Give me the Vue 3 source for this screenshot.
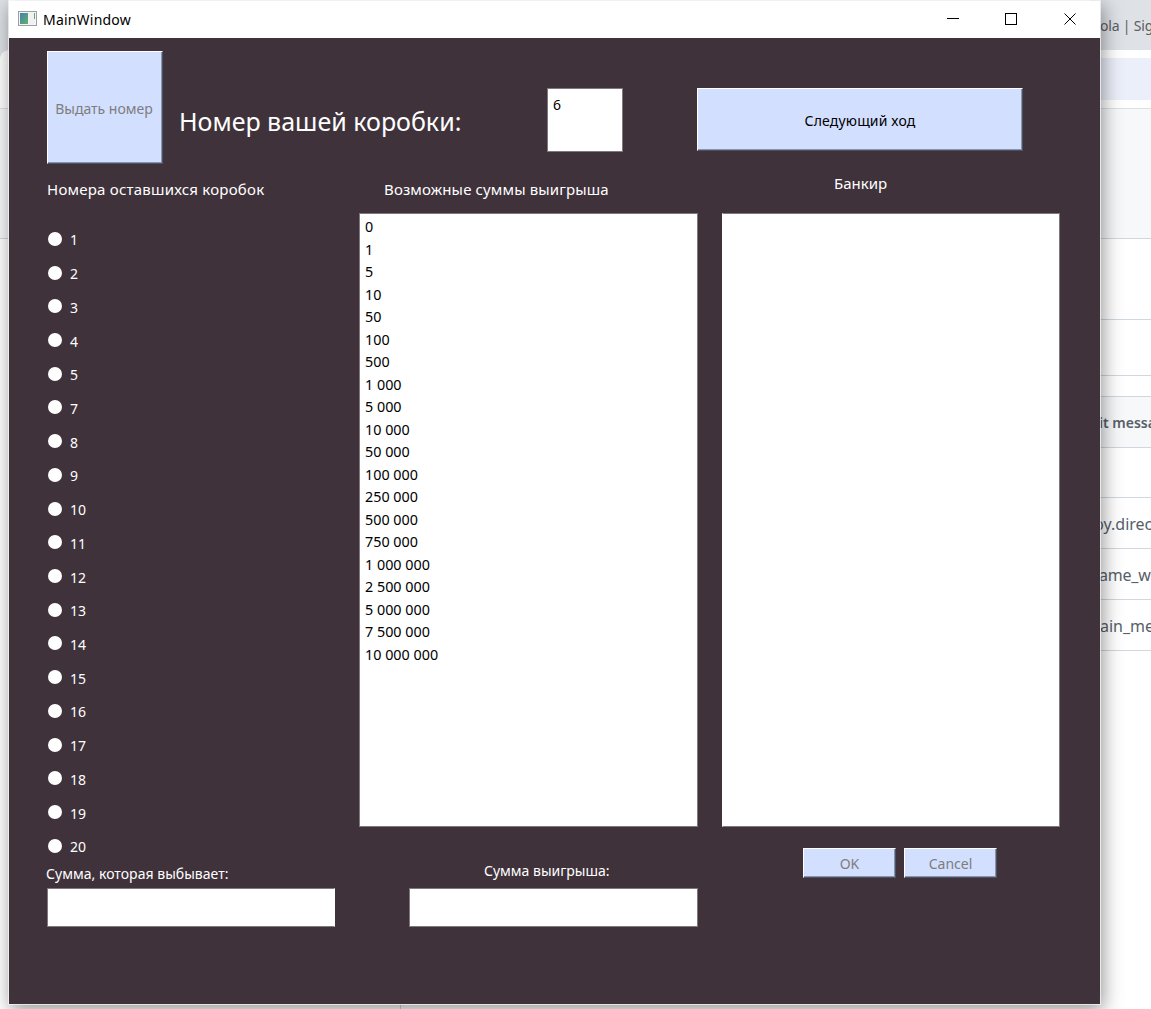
<script setup>
const boxes = Array.from({ length: 20 }, (_, i) => i + 1).filter((n) => n !== 6)
const sums = [
  '0', '1', '5', '10', '50', '100', '500', '1 000', '5 000', '10 000', '50 000',
  '100 000', '250 000', '500 000', '750 000', '1 000 000', '2 500 000',
  '5 000 000', '7 500 000', '10 000 000',
]
</script>

<template>
  <div class="desktop">
    <div class="page">
      <div class="strip tabs"><span>ola | Sig</span></div>
      <div class="strip toolbar"></div>
      <div class="strip header"></div>
      <div class="strip blank"></div>
      <div class="strip info"></div>
      <div class="strip gap"></div>
      <div class="strip commit"><span>it messa</span></div>
      <div class="strip file first"></div>
      <div class="strip file"><span class="dir">by.direc</span></div>
      <div class="strip file"><span class="game">ame_wi</span></div>
      <div class="strip file"><span>ain_me</span></div>
    </div>
    <div class="edge">
      <div class="edge-tabs"></div>
      <div class="edge-bar"></div>
      <div class="edge-head"></div>
      <div class="edge-rest"></div>
    </div>
    <div class="sidebar-rule"></div>

    <div class="window">
      <div class="titlebar">
        <svg class="app-icon" width="19" height="15" viewBox="0 0 19 15">
          <defs>
            <linearGradient id="pane" x1="0" y1="0" x2="1" y2="1">
              <stop offset="0" stop-color="#4a7fb0" />
              <stop offset="1" stop-color="#5db36a" />
            </linearGradient>
          </defs>
          <rect x="0.5" y="0.5" width="18" height="14" fill="#f4f4f4" stroke="#9aa0a6" />
          <rect x="2" y="2" width="8" height="11" fill="url(#pane)" />
          <rect x="11" y="2" width="6" height="11" fill="#f1f1f1" />
          <rect x="16" y="2" width="1" height="6" fill="#5fa58a" />
        </svg>
        <span class="title">MainWindow</span>
        <svg class="controls" width="130" height="14" viewBox="0 0 130 14" fill="none" stroke="#000" shape-rendering="crispEdges">
          <path d="M0 6.5H12" />
          <rect x="58.5" y="1.5" width="11" height="11" />
          <path d="M117.5 1.5L128.5 12.5M128.5 1.5L117.5 12.5" shape-rendering="auto" />
        </svg>
      </div>

      <div class="content">
        <div class="top">
          <button class="btn issue" disabled>Выдать номер</button>
          <h1>Номер вашей коробки:</h1>
          <div class="field number">6</div>
          <button class="btn next">Следующий ход</button>
        </div>

        <div class="columns">
          <section class="col boxes">
            <h2 class="l-boxes">Номера оставшихся коробок</h2>
            <ul class="radios">
              <li v-for="n in boxes" :key="n"><i></i><span>{{ n }}</span></li>
            </ul>
            <p class="caption l-out">Сумма, которая выбывает:</p>
            <div class="field out"></div>
          </section>
          <section class="col sums">
            <h2 class="l-sums">Возможные суммы выигрыша</h2>
            <ul class="field list">
              <li v-for="s in sums" :key="s">{{ s }}</li>
            </ul>
            <p class="caption l-win">Сумма выигрыша:</p>
            <div class="field win"></div>
          </section>
          <section class="col banker">
            <h2 class="l-bank">Банкир</h2>
            <div class="field list"></div>
            <div class="actions">
              <button class="btn small" disabled>OK</button>
              <button class="btn small" disabled>Cancel</button>
            </div>
          </section>
        </div>
      </div>
    </div>
  </div>
</template>

<style>
body {
  margin: 0;
  overflow: hidden;
}
</style>

<style scoped>
.desktop {
  position: relative;
  width: 1151px;
  height: 1009px;
  overflow: hidden;
  background: #fff;
  font-family: "Noto Sans", "Open Sans", sans-serif;
  font-size: 14px;
}
.page {
  position: absolute;
  left: 1090px;
  top: 0;
  width: 61px;
  overflow: hidden;
}
.strip {
  box-sizing: border-box;
  display: flex;
  align-items: center;
  padding-left: 10px;
  white-space: nowrap;
  color: #57606a;
  border-bottom: 1px solid #d0d7de;
}
.tabs { height: 50px; padding-top: 1px; background: #dee1e6; color: #5a5d61; border: 0; letter-spacing: -0.2px; }
.toolbar { height: 59px; background: #ebeff9; border-top: 8px solid #fff; border-bottom: 0; box-shadow: inset 0 -1px #dfe1e0, inset 0 -9px #fff; }
.header { height: 130px; background: #f6f8fa; }
.blank { height: 81px; }
.info { height: 56px; }
.gap { height: 21px; }
.commit { height: 51px; background: #f6f8fa; font-weight: 600; font-size: 14px; padding-left: 9px; }
.file { height: 51px; font-size: 16px; padding-top: 2px; }
.file.first { height: 50px; }
.file .dir { margin-left: -6px; }
.file .game { margin-left: -1px; letter-spacing: -0.2px; }
.edge {
  position: absolute;
  left: 0;
  top: 0;
  width: 9px;
  height: 1009px;
}
.edge-tabs { height: 50px; background: #dee1e6; }
.edge-bar { height: 58px; background: #fff; border-radius: 9px 0 0; box-shadow: 0 -9px #dee1e6; border-bottom: 1px solid #dfe1e0; }
.edge-head { height: 129px; background: #f6f8fa; border-bottom: 1px solid #d0d7de; }
.edge-rest { height: 770px; background: #fff; }
.sidebar-rule {
  position: absolute;
  left: 400px;
  top: 1000px;
  width: 1px;
  height: 9px;
  background: #d0d7de;
}
.window {
  position: absolute;
  left: 9px;
  top: 1px;
  width: 1091px;
  height: 1003px;
  background: #3f323b;
  box-shadow: 0 0 0 1px rgba(245, 245, 245, 0.75), 2px 5px 18px 1px rgba(0, 0, 0, 0.42);
}
.titlebar {
  display: flex;
  align-items: center;
  height: 37px;
  background: #fff;
}
.app-icon { margin: -2px 0 0 9px; }
.title { margin-left: 6px; width: 600px; color: #000; letter-spacing: 0.2px; }
.controls { margin: -2px 23px 0 auto; }
.content { padding: 13px 0 0 38px; }
.top { display: flex; height: 112px; align-items: flex-start; }
.btn {
  box-sizing: border-box;
  padding: 0;
  font: inherit;
  color: #000;
  background: #d3dfff;
  border: 1px solid;
  border-color: #fff #4c535f #4c535f #fff;
  border-radius: 0;
  box-shadow: inset -1px -1px #8594b0;
  white-space: nowrap;
}
.btn:disabled { color: #7d7d7d; }
.issue { width: 116px; height: 113px; padding: 1px 2px 0 0; }
h1 {
  margin: 53px 0 0 16px;
  width: 368px;
  font-size: 25px;
  line-height: 34px;
  font-weight: 400;
  color: #fff;
  white-space: nowrap;
}
.field {
  box-sizing: border-box;
  background: #fff;
  border: 1px solid #7f777c;
  color: #000;
}
.number { width: 76px; height: 64px; margin-top: 37px; padding: 6px 5px; line-height: 20px; }
.next { width: 326px; height: 63px; margin: 37px 0 0 74px; padding-top: 1px; letter-spacing: 0.16px; }
.columns { display: flex; }
.col { display: flex; flex-direction: column; }
h2 {
  margin: 0;
  height: 50px;
  line-height: 20px;
  padding-top: 16px;
  box-sizing: border-box;
  font-size: 15px;
  font-weight: 400;
  color: #fff;
  white-space: nowrap;
}
.boxes { width: 288px; margin-right: 24px; }
.sums { width: 339px; margin-right: 24px; }
.banker { width: 338px; }
.l-boxes { letter-spacing: 0.23px; }
.l-sums { padding-left: 25px; letter-spacing: 0.13px; }
.l-bank { padding-left: 112px; padding-top: 10px; }
ul { list-style: none; margin: 0; padding: 0; }
.radios { padding-top: 9px; height: 641px; color: #fff; }
.radios li { display: flex; align-items: center; height: 33.72px; }
.radios i { width: 14px; height: 14px; margin-left: 1px; border-radius: 50%; background: #fff; }
.radios span { margin: 2px 0 0 8px; }
.list { height: 614px; padding: 2px 5px; line-height: 22.5px; font-size: 14.35px; }
.caption { margin: 0; line-height: 20px; color: #fff; white-space: nowrap; }
.l-out { height: 24px; padding-top: 1px; margin-left: -1px; letter-spacing: 0.03px; }
.field.out { height: 39px; border-right-color: #fff; }
.l-win { margin: 34px 0 0 125px; height: 27px; }
.field.win { height: 39px; margin-left: 50px; }
.banker .list { border-left-color: #fff; }
.actions { display: flex; gap: 8px; margin: 21px 0 0 81px; }
.small { width: 93px; height: 30px; padding-top: 1px; }
</style>
